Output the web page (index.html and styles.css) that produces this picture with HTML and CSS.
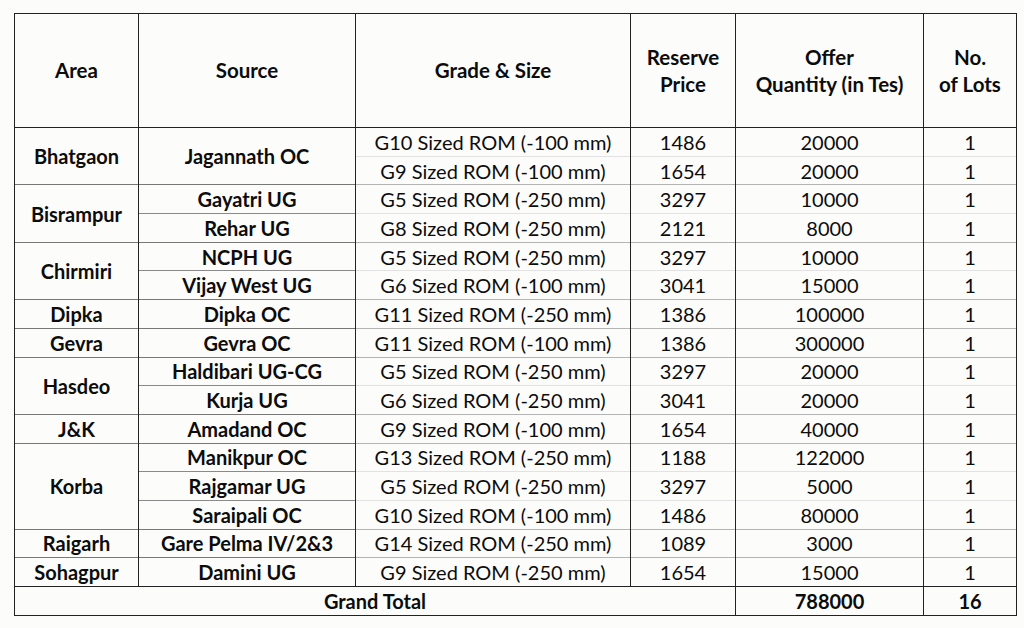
FILE: index.html
```html
<!DOCTYPE html>
<html>
<head>
<meta charset="utf-8">
<link rel="stylesheet" href="styles.css">
</head>
<body>
<table class="lots">
  <colgroup>
    <col class="c-area"><col class="c-src"><col class="c-grade"><col class="c-price"><col class="c-qty"><col class="c-lots">
  </colgroup>
  <thead>
    <tr class="head">
      <th>Area</th>
      <th>Source</th>
      <th>Grade &amp; Size</th>
      <th>Reserve<br>Price</th>
      <th>Offer<br>Quantity (in Tes)</th>
      <th>No.<br>of Lots</th>
    </tr>
  </thead>
  <tbody>
    <tr class="grp"><td class="area" rowspan="2">Bhatgaon</td><td class="src" rowspan="2">Jagannath OC</td><td class="grade">G10 Sized ROM (-100 mm)</td><td class="num">1486</td><td class="num">20000</td><td class="num">1</td></tr>
    <tr><td class="grade">G9 Sized ROM (-100 mm)</td><td class="num">1654</td><td class="num">20000</td><td class="num">1</td></tr>
    <tr class="grp"><td class="area" rowspan="2">Bisrampur</td><td class="src">Gayatri UG</td><td class="grade">G5 Sized ROM (-250 mm)</td><td class="num">3297</td><td class="num">10000</td><td class="num">1</td></tr>
    <tr><td class="src">Rehar UG</td><td class="grade">G8 Sized ROM (-250 mm)</td><td class="num">2121</td><td class="num">8000</td><td class="num">1</td></tr>
    <tr class="grp"><td class="area" rowspan="2">Chirmiri</td><td class="src">NCPH UG</td><td class="grade">G5 Sized ROM (-250 mm)</td><td class="num">3297</td><td class="num">10000</td><td class="num">1</td></tr>
    <tr><td class="src">Vijay West UG</td><td class="grade">G6 Sized ROM (-100 mm)</td><td class="num">3041</td><td class="num">15000</td><td class="num">1</td></tr>
    <tr class="grp"><td class="area">Dipka</td><td class="src">Dipka OC</td><td class="grade">G11 Sized ROM (-250 mm)</td><td class="num">1386</td><td class="num">100000</td><td class="num">1</td></tr>
    <tr class="grp"><td class="area">Gevra</td><td class="src">Gevra OC</td><td class="grade">G11 Sized ROM (-100 mm)</td><td class="num">1386</td><td class="num">300000</td><td class="num">1</td></tr>
    <tr class="grp"><td class="area" rowspan="2">Hasdeo</td><td class="src">Haldibari UG-CG</td><td class="grade">G5 Sized ROM (-250 mm)</td><td class="num">3297</td><td class="num">20000</td><td class="num">1</td></tr>
    <tr><td class="src">Kurja UG</td><td class="grade">G6 Sized ROM (-250 mm)</td><td class="num">3041</td><td class="num">20000</td><td class="num">1</td></tr>
    <tr class="grp"><td class="area">J&amp;K</td><td class="src">Amadand OC</td><td class="grade">G9 Sized ROM (-100 mm)</td><td class="num">1654</td><td class="num">40000</td><td class="num">1</td></tr>
    <tr class="grp"><td class="area" rowspan="3">Korba</td><td class="src">Manikpur OC</td><td class="grade">G13 Sized ROM (-250 mm)</td><td class="num">1188</td><td class="num">122000</td><td class="num">1</td></tr>
    <tr><td class="src">Rajgamar UG</td><td class="grade">G5 Sized ROM (-250 mm)</td><td class="num">3297</td><td class="num">5000</td><td class="num">1</td></tr>
    <tr><td class="src">Saraipali OC</td><td class="grade">G10 Sized ROM (-100 mm)</td><td class="num">1486</td><td class="num">80000</td><td class="num">1</td></tr>
    <tr class="grp"><td class="area">Raigarh</td><td class="src">Gare Pelma IV/2&amp;3</td><td class="grade">G14 Sized ROM (-250 mm)</td><td class="num">1089</td><td class="num">3000</td><td class="num">1</td></tr>
    <tr class="grp"><td class="area">Sohagpur</td><td class="src">Damini UG</td><td class="grade">G9 Sized ROM (-250 mm)</td><td class="num">1654</td><td class="num">15000</td><td class="num">1</td></tr>
  </tbody>
  <tfoot>
    <tr class="total"><td colspan="4">Grand Total</td><td>788000</td><td>16</td></tr>
  </tfoot>
</table>
</body>
</html>
```
FILE: styles.css
```css
html, body {
  margin: 0;
  padding: 0;
  background: #fcfcfb;
}
body {
  padding: 13px 0 0 14px;
  font-family: Lato, "Open Sans", "DejaVu Sans", sans-serif;
  color: #0c0c0c;
}
.lots {
  border-collapse: collapse;
  table-layout: fixed;
  width: 1002px;
}
.c-area { width: 124px; }
.c-src { width: 217px; }
.c-grade { width: 275px; }
.c-price { width: 105px; }
.c-qty { width: 188px; }
.c-lots { width: 93px; }

.lots th, .lots td {
  border-left: 1.5px solid #222;
  border-right: 1.5px solid #222;
  text-align: center;
  vertical-align: middle;
  padding: 0;
  line-height: 24px;
}
.head th {
  height: 113px;
  font-size: 20.5px;
  font-weight: 700;
  border-top: 1.5px solid #222;
  border-bottom: 1.5px solid #222;
  line-height: 27px;
}
.lots tbody tr {
  height: 28.7px;
}
.lots tbody td {
  font-size: 20px;
  border-top: 1px solid #e2e2e2;
}
.lots tbody tr.grp td {
  border-top-color: #b4b4b4;
}
.lots tbody tr:first-child td {
  border-top: 1.5px solid #222;
}
.lots td.area, .lots td.src {
  font-weight: 700;
  font-size: 20px;
  border-top-color: #8a8a8a;
}
.lots tbody tr.grp td.area, .lots tbody tr.grp td.src {
  border-top-color: #777;
}
.lots td.grade, .lots td.num {
  font-weight: 400;
}
.total td {
  height: 28px;
  font-size: 20px;
  font-weight: 700;
  border-top: 1.5px solid #222;
  border-bottom: 1.5px solid #222;
}
```
